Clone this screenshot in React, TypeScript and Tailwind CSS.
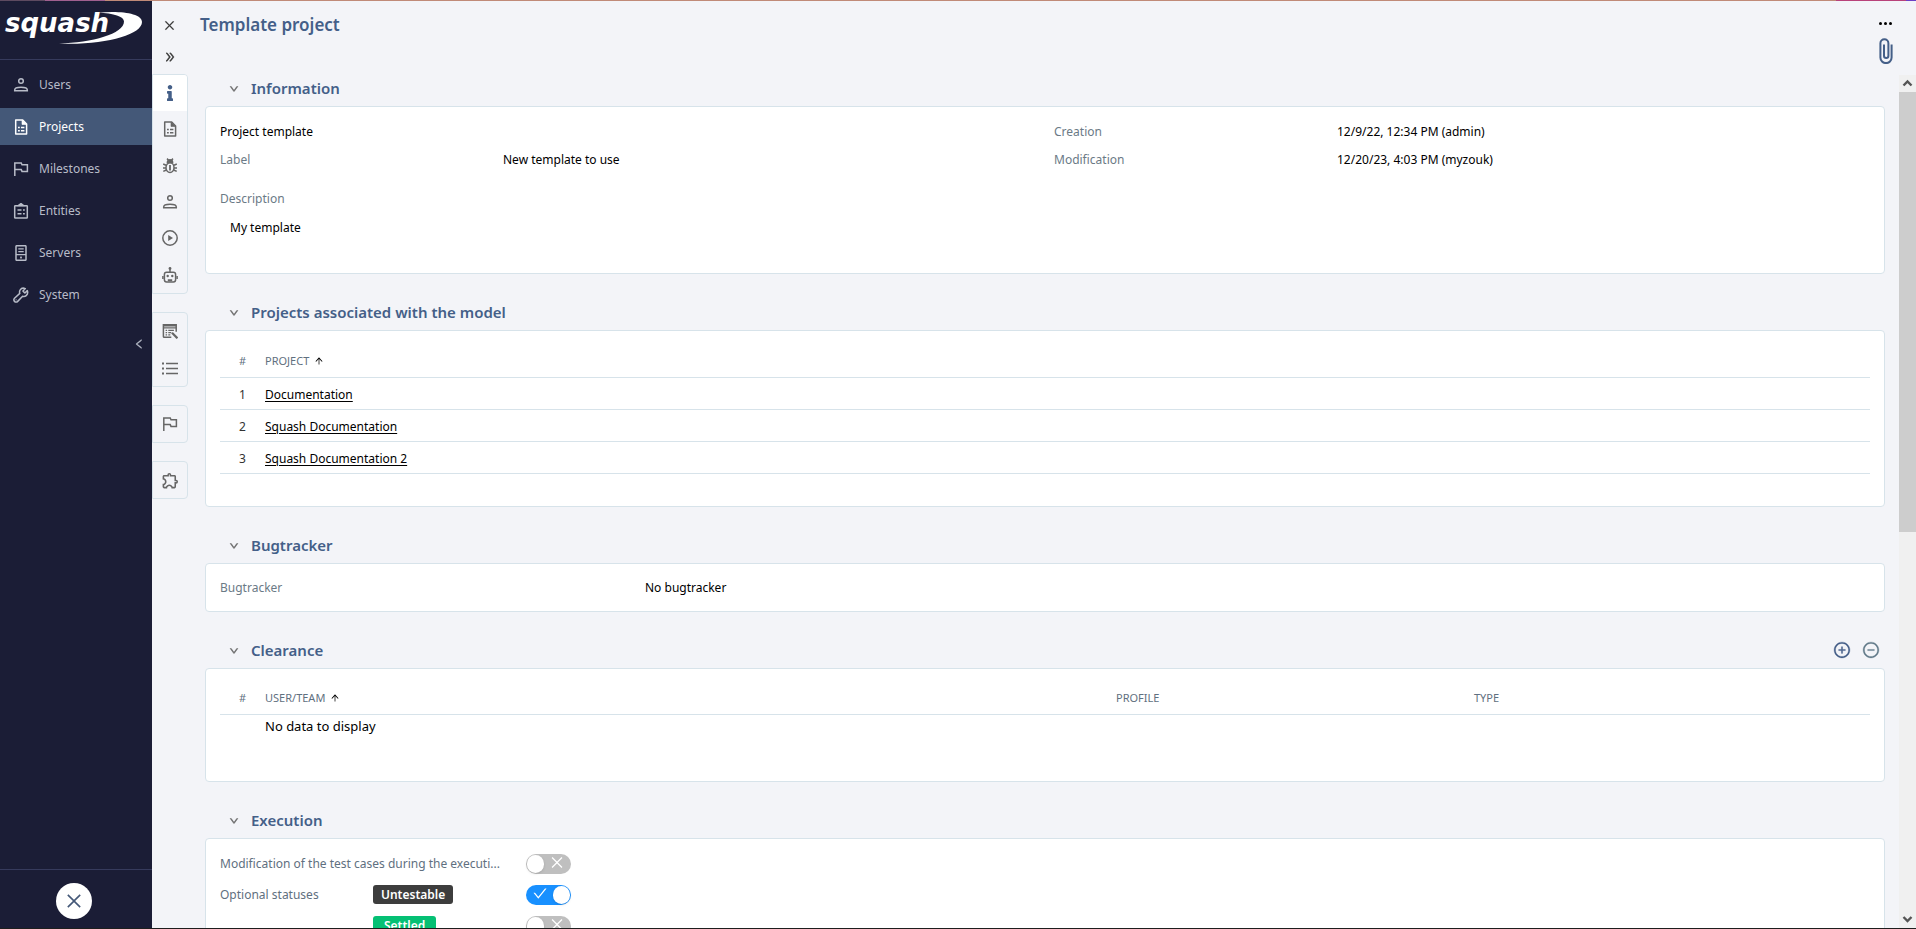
import { useState } from 'react';
import type { ReactNode } from 'react';
import clsx from 'clsx';
import {
  AiOutlineArrowUp,
  AiOutlineCheck,
  AiOutlineClose,
  AiOutlineDoubleRight,
  AiOutlineDown,
  AiOutlineLeft,
  AiOutlineMinusCircle,
  AiOutlinePlusCircle,
} from 'react-icons/ai';
import { FaInfo } from 'react-icons/fa';
import { MdOutlineExtension } from 'react-icons/md';

type IconProps = { className?: string };

const Svg = ({ className, children }: IconProps & { children: ReactNode }) => (
  <svg viewBox="0 0 16 16" className={className ?? 'size-4'} fill="none" stroke="currentColor" strokeWidth="1.5" aria-hidden="true">
    {children}
  </svg>
);

const UserIcon = (props: IconProps) => (
  <Svg {...props}>
    <circle cx="8" cy="4" r="2.3" />
    <path d="M1.7 13.8v-.8c0-1.900 3.200-2.700 6.300-2.700s6.300.8 6.300 2.700v.8z" />
  </Svg>
);

const FileIcon = (props: IconProps) => (
  <Svg {...props}>
    <path d="M2.700 1h7L13.600 5v10H2.700z" strokeLinejoin="round" />
    <path d="M9 1v4.500h4.600z" fill="currentColor" strokeWidth="0.600" />
    <path d="M5 8.500h1.800M8 8.500h3.400M5 11.700h1.800M8 11.700h3.400" />
  </Svg>
);

const FlagIcon = (props: IconProps) => (
  <Svg {...props}>
    <path d="M1.800 15V2h6.400l.8 1.800h5.400v6.600H9l-.8-1.800H1.800" />
  </Svg>
);

const EntitiesIcon = (props: IconProps) => (
  <Svg {...props}>
    <rect x="1.700" y="2.700" width="12.600" height="12.400" rx="0.600" />
    <path d="M5.600 2.400 8 .6l2.400 1.800z" fill="currentColor" />
    <path d="M4.500 7h4M10 7h1.800M4.500 10.700h4M10 10.700h1.800" />
  </Svg>
);

const ServerIcon = (props: IconProps) => (
  <Svg {...props}>
    <rect x="3" y=".7" width="10" height="14.600" rx="0.800" />
    <path d="M5.300 3.800h5.400M5.300 6.600h5.400M3 9.600h10" strokeWidth="1.200" />
    <rect x="7.100" y="11.600" width="1.800" height="1.800" fill="currentColor" stroke="none" />
  </Svg>
);

const WrenchIcon = (props: IconProps) => (
  <Svg {...props}>
    <path
      d="M14.3 3.6 11.9 6 10 4.1l2.3-2.5C10.3.8 8.200 1.300 7.200 2.800c-.8 1.200-.8 2.500-.4 3.600L1.500 11.200a2.200 2.200 0 1 0 3.200 3.200l4.900-5.100c1.200.4 2.600.2 3.600-.7 1.400-1.200 1.800-3.200 1.100-5z"
      strokeLinejoin="round"
    />
    <circle cx="3.100" cy="12.800" r="0.600" fill="currentColor" stroke="none" />
  </Svg>
);

const BugIcon = (props: IconProps) => (
  <Svg {...props}>
    <ellipse cx="8" cy="9.600" rx="4" ry="4.900" />
    <path d="M5.400 4.400a2.600 2.600 0 0 1 5.200 0z" fill="currentColor" />
    <path d="m5 .6 1.600 1.600M11 .6 9.400 2.200M4 7.200 1.200 6M12 7.200 14.800 6M4 9.900H1M12 9.900h3M4.300 12l-3 1.400M11.700 12l3 1.400" />
    <path d="M8 7v5.600" strokeWidth="1.800" />
  </Svg>
);

const PlayIcon = (props: IconProps) => (
  <Svg {...props}>
    <circle cx="8" cy="8" r="7.200" />
    <path d="M6.200 5v6L11 8z" fill="currentColor" stroke="none" />
  </Svg>
);

const RobotIcon = (props: IconProps) => (
  <Svg {...props}>
    <path d="M8 1.500v3.700M.9 9v3M15.100 9v3" />
    <circle cx="8" cy="1.400" r="1.400" fill="currentColor" stroke="none" />
    <rect x="2.400" y="5.300" width="11.200" height="9.600" rx="2.200" />
    <circle cx="5.700" cy="9" r="1.200" fill="currentColor" stroke="none" />
    <circle cx="10.300" cy="9" r="1.200" fill="currentColor" stroke="none" />
    <path d="M5.800 13.200h4.400" strokeWidth="2" />
  </Svg>
);

const CustomFieldsIcon = (props: IconProps) => (
  <Svg {...props}>
    <path d="M9.300 14.200H2.200a.8.8 0 0 1-.8-.8V1.800h12.800v7" />
    <path d="M1.400 2.600h12.800" strokeWidth="1.600" />
    <path d="M1.400 4.800h12.800" strokeWidth="1.200" />
    <path d="M3.600 7.400h1.500M6.300 7.400h5.600M3.600 9.600h1.500M6.300 9.600h3M3.600 11.800h1.500M6.300 11.800h2" strokeWidth="1.200" />
    <path d="m10 9.800 5.400 5.500" strokeWidth="2.200" />
  </Svg>
);

const ListIcon = (props: IconProps) => (
  <Svg {...props}>
    <path d="M4 3.500h12M4 8.500h12M4 13.500h12" />
    <path d="M0 3.500h2M0 8.500h2M0 13.500h2" strokeWidth="1.800" />
  </Svg>
);

const PaperclipIcon = ({ className }: IconProps) => (
  <svg viewBox="0 0 14 26" className={className} fill="none" stroke="currentColor" strokeWidth="2" aria-hidden="true">
    <path d="M12.600 6.500v13a5.600 5.600 0 0 1-11.200 0V5.200a4 4 0 0 1 8 0v12.600a2.200 2.200 0 0 1-4.400 0V6.500" />
  </svg>
);

const Logo = () => (
  <svg viewBox="0 0 152 58" className="h-[58px] w-full" role="img" aria-label="squash">
    <text x="5" y="31" fill="#fff" fontFamily="'DejaVu Sans', sans-serif" fontSize="26" fontWeight="700" fontStyle="italic">
      squash
    </text>
    <path
      d="M98 11.800C119 9.500 142 12 142 21c0 13-38 23.500-83 21.500 33-1 65-9.500 65-22 0-5-10-8.200-26-8.700z"
      fill="#fff"
    />
  </svg>
);

const navItems = [
  { label: 'Users', Icon: UserIcon },
  { label: 'Projects', Icon: FileIcon },
  { label: 'Milestones', Icon: FlagIcon },
  { label: 'Entities', Icon: EntitiesIcon },
  { label: 'Servers', Icon: ServerIcon },
  { label: 'System', Icon: WrenchIcon },
];

const Sidebar = () => (
  <nav className="flex w-[152px] shrink-0 flex-col bg-[#1b1d36] text-[#b8bcc8]">
    <div className="border-b border-[#363a5c]">
      <Logo />
    </div>
    <ul className="mt-[6px] flex flex-col gap-[5px]">
      {navItems.map(({ label, Icon }) => (
        <li key={label}>
          <a
            href="#"
            className={clsx(
              'flex h-[37px] items-center gap-[10px] pl-[13px]',
              label === 'Projects' && 'bg-[#445878] text-white',
            )}
          >
            <Icon className="size-4" />
            {label}
          </a>
        </li>
      ))}
    </ul>
    <button type="button" aria-label="Collapse menu" className="mt-[25px] mr-[7px] self-end">
      <AiOutlineLeft className="size-3" stroke="currentColor" strokeWidth="30" />
    </button>
    <div className="mt-auto flex h-[59px] items-center border-t border-[#363a5c] pl-14">
      <button
        type="button"
        aria-label="Close administration"
        className="mt-1 flex size-9 items-center justify-center rounded-full bg-white text-[#445878]"
      >
        <AiOutlineClose className="size-5" />
      </button>
    </div>
  </nav>
);

const RailGroup = ({ className, children }: IconProps & { children: ReactNode }) => (
  <div className={clsx('grid auto-rows-fr overflow-hidden rounded-r border border-[#d7e3ea]', className)}>{children}</div>
);

const RailButton = ({ label, active, children }: { label: string; active?: boolean; children: ReactNode }) => (
  <button
    type="button"
    aria-label={label}
    className={clsx('flex items-center justify-center', active ? 'bg-white text-[#445f88]' : 'text-[#666]')}
  >
    {children}
  </button>
);

const Rail = () => (
  <div className="flex w-9 shrink-0 flex-col gap-[18px] text-[#333]">
    <div className="flex h-[55px] flex-col items-center gap-[19px] pt-[18px] pr-px">
      <button type="button" aria-label="Close">
        <AiOutlineClose className="size-[13px]" stroke="currentColor" strokeWidth="20" />
      </button>
      <button type="button" aria-label="Expand">
        <AiOutlineDoubleRight className="size-3" stroke="currentColor" strokeWidth="50" />
      </button>
    </div>
    <RailGroup className="h-[220px]">
      <RailButton label="Information" active>
        <FaInfo className="size-4" />
      </RailButton>
      <RailButton label="Projects associated with the model">
        <FileIcon />
      </RailButton>
      <RailButton label="Bugtracker">
        <BugIcon />
      </RailButton>
      <RailButton label="Clearance">
        <UserIcon />
      </RailButton>
      <RailButton label="Execution">
        <PlayIcon />
      </RailButton>
      <RailButton label="Automation">
        <RobotIcon />
      </RailButton>
    </RailGroup>
    <RailGroup className="h-[75px]">
      <RailButton label="Custom fields">
        <CustomFieldsIcon />
      </RailButton>
      <RailButton label="Custom lists">
        <ListIcon />
      </RailButton>
    </RailGroup>
    <RailGroup className="h-[38px]">
      <RailButton label="Milestones">
        <FlagIcon />
      </RailButton>
    </RailGroup>
    <RailGroup className="h-[38px]">
      <RailButton label="Plugins">
        <MdOutlineExtension className="size-[19px]" />
      </RailButton>
    </RailGroup>
  </div>
);

interface SectionProps {
  title: string;
  actions?: ReactNode;
  className?: string;
  children: ReactNode;
}

const Section = ({ title, actions, className, children }: SectionProps) => (
  <section>
    <div className="mb-[5px] flex h-[26px] items-center pr-[5px] pl-6">
      <button type="button" aria-label={`Toggle ${title}`} className="mt-[2px] mr-3 text-[#666]">
        <AiOutlineDown className="size-[10px]" stroke="currentColor" strokeWidth="70" />
      </button>
      <h2 className="text-[15px] font-semibold text-[#445f88]">{title}</h2>
      {actions && <div className="ml-auto flex gap-[11px]">{actions}</div>}
    </div>
    <div className={clsx('rounded border border-[#d7e3ea] bg-white px-[14px]', className)}>{children}</div>
  </section>
);

const Field = ({ label, value }: { label: string; value: string }) => (
  <div className="flex h-7 items-center">
    <dt className="w-[283px] text-[#6b7a86]">{label}</dt>
    <dd>{value}</dd>
  </div>
);

const Information = () => (
  <Section title="Information" className="pt-[11px] pb-[31px]">
    <div className="grid grid-cols-2 gap-x-[18px]">
      <div>
        <p className="flex h-7 items-center">Project template</p>
        <dl>
          <Field label="Label" value="New template to use" />
        </dl>
      </div>
      <dl>
        <Field label="Creation" value="12/9/22, 12:34 PM (admin)" />
        <Field label="Modification" value="12/20/23, 4:03 PM (myzouk)" />
      </dl>
    </div>
    <dl className="mt-[11px]">
      <dt className="flex h-7 items-center text-[#6b7a86]">Description</dt>
      <dd className="mt-px flex h-7 items-center pl-[10px]">My template</dd>
    </dl>
  </Section>
);

const headCell = 'p-0 text-left text-[11px] font-normal text-[#5f7080]';

const SortableHead = ({ children }: { children: ReactNode }) => (
  <th className={headCell}>
    <button type="button" className="flex items-center gap-[5px]">
      {children}
      <AiOutlineArrowUp className="size-[10px] text-black" />
    </button>
  </th>
);

const projects = ['Documentation', 'Squash Documentation', 'Squash Documentation 2'];

const ProjectsTable = () => (
  <table className="w-full table-fixed border-collapse">
    <thead>
      <tr className="h-8 border-b border-[#d7e3ea]">
        <th className="w-[45px] p-0 text-[11px] font-normal text-[#5f7080]">#</th>
        <SortableHead>PROJECT</SortableHead>
      </tr>
    </thead>
    <tbody>
      {projects.map((name, index) => (
        <tr key={name} className="h-8 border-b border-[#d7e3ea]">
          <td className="px-0 pt-1 pb-0 text-center text-[#333]">{index + 1}</td>
          <td className="px-0 pt-1 pb-0">
            <a href="#" className="underline underline-offset-2">
              {name}
            </a>
          </td>
        </tr>
      ))}
    </tbody>
  </table>
);

const ClearanceTable = () => (
  <table className="w-full table-fixed border-collapse">
    <thead>
      <tr className="h-8 border-b border-[#d7e3ea]">
        <th className="w-[45px] p-0 text-[11px] font-normal text-[#5f7080]">#</th>
        <SortableHead>USER/TEAM</SortableHead>
        <th className={clsx(headCell, 'w-[358px]')}>PROFILE</th>
        <th className={clsx(headCell, 'w-[396px]')}>TYPE</th>
      </tr>
    </thead>
    <tbody>
      <tr className="h-[22px]">
        <td className="p-0" />
        <td className="p-0 text-[13px]" colSpan={3}>
          No data to display
        </td>
      </tr>
    </tbody>
  </table>
);

const Toggle = ({ label, defaultOn = false }: { label: string; defaultOn?: boolean }) => {
  const [on, setOn] = useState(defaultOn);

  return (
    <button
      type="button"
      role="switch"
      aria-checked={on}
      aria-label={label}
      onClick={() => setOn(!on)}
      className={clsx(
        'flex h-5 w-[45px] shrink-0 items-center justify-between rounded-full px-px text-white',
        on ? 'flex-row-reverse bg-[#1890ff]' : 'bg-[#bfbfbf]',
      )}
    >
      <span className="size-[18px] rounded-full bg-white shadow" />
      {on ? <AiOutlineCheck className="mx-[5px] mb-[3px] size-[17px]" /> : <AiOutlineClose className="mx-[5px] mb-[3px] size-[17px]" />}
    </button>
  );
};

// Fake window scrollbar, the thumb covers a bit more than half of the track
const Scrollbar = () => (
  <div className="flex w-[17px] shrink-0 flex-col items-center bg-[#f0f0f0] text-[#555]" aria-hidden="true">
    <svg viewBox="0 0 17 17" className="size-[17px] shrink-0" fill="none" stroke="currentColor" strokeWidth="2.400">
      <path d="M4.500 10.500l4-4 4 4" />
    </svg>
    <div className="h-[51.6%] w-full bg-[#cdcdcd]" />
    <svg viewBox="0 0 17 17" className="mt-auto size-[17px] shrink-0" fill="none" stroke="currentColor" strokeWidth="2.400">
      <path d="M4.500 6l4 4 4-4" />
    </svg>
  </div>
);

const App: React.FC = () => {
  return (
    <div className="flex h-screen flex-col overflow-hidden bg-[#f3f4f8] font-['Noto_Sans',sans-serif] text-[12px] leading-4 text-black">
      <div className="flex h-px shrink-0">
        <div className="w-[45px] bg-[#5d4a60]" />
        <div className="w-[60px] bg-[#a0608f]" />
        <div className="flex-1 bg-[#c08a78]" />
        <div className="w-[70px] bg-[#b8427a]" />
        <div className="w-[10px] bg-[#6c3fc4]" />
      </div>
      <div className="flex min-h-0 flex-1">
        <Sidebar />
        <Rail />
        <main className="flex min-w-0 flex-1 flex-col">
          <header className="flex h-[74px] shrink-0 justify-between pr-[23px] pl-3">
            <h1 className="mt-3 text-[17px] leading-6 font-semibold text-[#445f88]">Template project</h1>
            <div className="mt-5 flex w-4 flex-col items-center gap-3">
              <button type="button" aria-label="More actions" className="flex h-[5px] items-center gap-[2px]">
                <span className="size-[3px] rounded-full bg-black" />
                <span className="size-[3px] rounded-full bg-black" />
                <span className="size-[3px] rounded-full bg-black" />
              </button>
              <button type="button" aria-label="Attachments" className="ml-[2px] text-[#445f88]">
                <PaperclipIcon className="h-[26px] w-[14px]" />
              </button>
            </div>
          </header>

          <div className="flex min-h-0 flex-1">
            <div className="flex min-w-0 flex-1 flex-col gap-[25px] overflow-hidden pr-[14px] pl-[17px]">
              <Information />

              <Section title="Projects associated with the model" className="pt-[14px] pb-8">
                <ProjectsTable />
              </Section>

              <Section title="Bugtracker">
                <dl className="flex h-[47px] items-center pt-[2px]">
                  <dt className="w-[425px] text-[#6b7a86]">Bugtracker</dt>
                  <dd>No bugtracker</dd>
                </dl>
              </Section>

              <Section
                title="Clearance"
                className="pt-[14px] pb-11"
                actions={
                  <>
                    <button type="button" aria-label="Add clearance" className="text-[#3f5a85]">
                      <AiOutlinePlusCircle className="size-[18px]" stroke="currentColor" strokeWidth="20" />
                    </button>
                    <button type="button" aria-label="Remove clearance" className="text-[#5f7787]">
                      <AiOutlineMinusCircle className="size-[18px]" stroke="currentColor" strokeWidth="20" />
                    </button>
                  </>
                }
              >
                <ClearanceTable />
              </Section>

              <Section title="Execution" className="pt-[10px] pb-4">
                <div className="flex h-[31px] items-center text-[#5f7080]">
                  <span className="w-[306px] truncate pr-4">Modification of the test cases during the executi...</span>
                  <Toggle label="Modification of the test cases during the execution" />
                </div>
                <div className="flex h-[31px] items-center text-[#5f7080]">
                  <span className="w-[153px]">Optional statuses</span>
                  <span className="w-[153px]">
                    <span className="rounded-[3px] bg-[#3d3d3d] px-2 py-px font-semibold text-white">Untestable</span>
                  </span>
                  <Toggle label="Untestable" defaultOn />
                </div>
                <div className="flex h-[31px] items-center text-[#5f7080]">
                  <span className="ml-[153px] w-[153px]">
                    <span className="rounded-[3px] bg-[#05c074] px-[11px] py-px font-semibold text-white">Settled</span>
                  </span>
                  <Toggle label="Settled" />
                </div>
              </Section>
            </div>
            <Scrollbar />
          </div>
        </main>
      </div>
      <div className="h-px shrink-0 bg-[#1e1e1e]" />
    </div>
  );
};

export default App;
